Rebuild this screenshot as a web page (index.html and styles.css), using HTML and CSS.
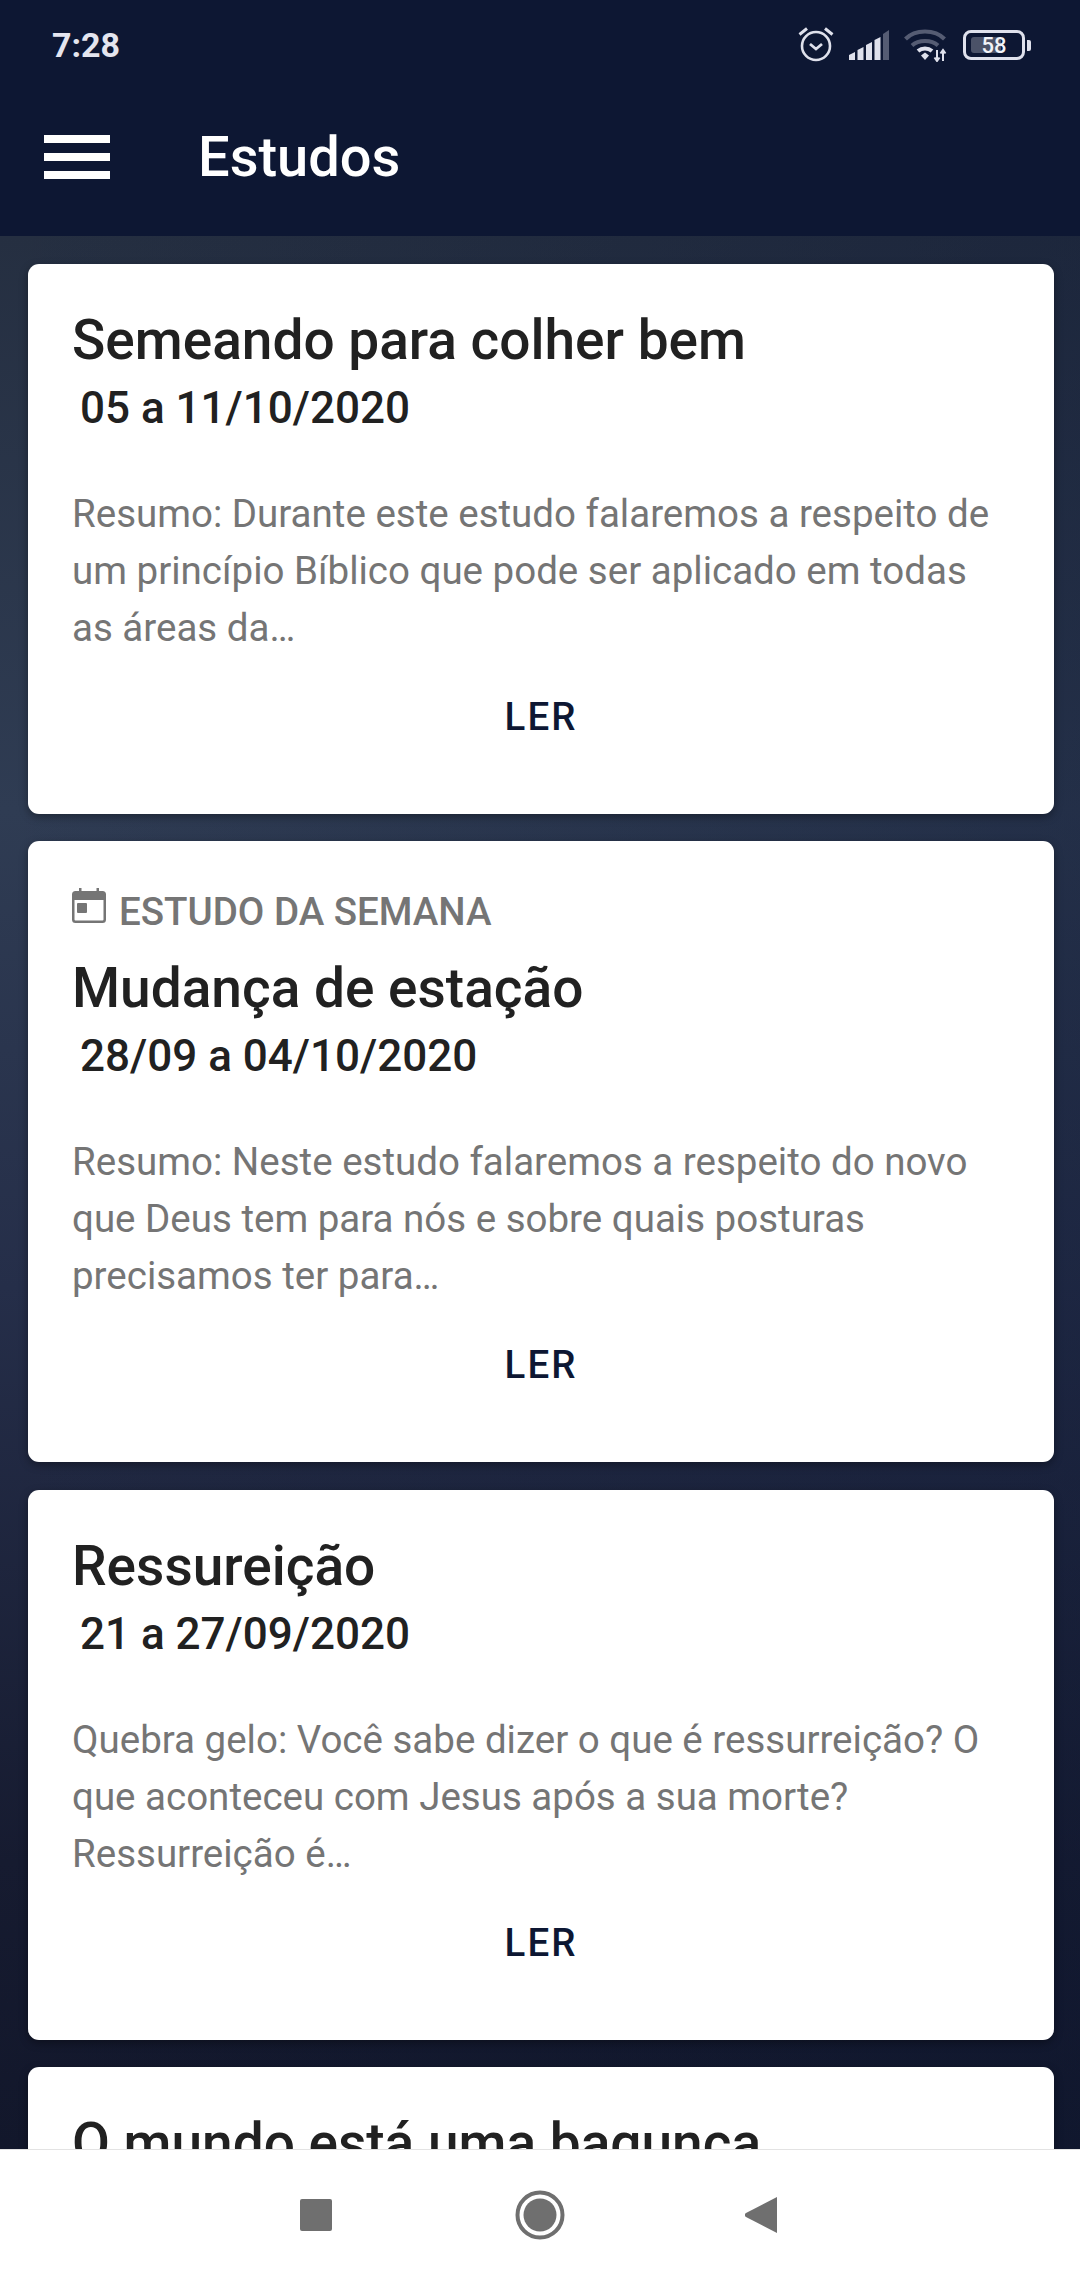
FILE: index.html
```html
<!DOCTYPE html>
<html>
<head>
    <title>Estudos</title>
    <link rel="stylesheet" href="styles.css">
</head>
<body>
    <header class="topbar">
        <div class="status">
            <span class="clock">7:28</span>
            <div class="status-icons">
                <svg class="ic-alarm" width="36" height="36" viewBox="0 0 36 36" fill="none" stroke="#dfe1ec">
                    <circle cx="18" cy="20" r="14" stroke-width="2.600"/>
                    <path d="M12 18l6 5 6-5" stroke-width="2.800"/>
                    <path d="M1.500 8.500L9 2.500M34.500 8.500L27 2.500" stroke-width="3"/>
                </svg>
                <svg class="ic-signal" width="40" height="30" viewBox="0 0 40 30" fill="#dfe1ec">
                    <path d="M0 30v-5l6-3v8z"/>
                    <path d="M8.500 30V20l6-3v13z"/>
                    <path d="M17 30V15l6-3v18z"/>
                    <path d="M25.500 30V10l6-3v23z"/>
                    <path d="M34 30V4l6-4v30z" fill="#555c73"/>
                </svg>
                <svg class="ic-wifi" width="44" height="34" viewBox="0 0 44 34" fill="none">
                    <path d="M1.500 11C11 1 31 1 40.500 11" stroke="#555c73" stroke-width="4"/>
                    <path d="M8 17.500c6.500-6 19.500-6 26 0" stroke="#555c73" stroke-width="4"/>
                    <path d="M14 23c4-3.500 10-3.500 14 0" stroke="#dfe1ec" stroke-width="4"/>
                    <path d="M17 27.500l4-3 4 3-4 4.500z" fill="#dfe1ec"/>
                    <path d="M33 22v11M30.500 29.500l2.500 3.500 2.500-3.500M39 33V22M36.500 25.500l2.500-3.500 2.500 3.500" stroke="#dfe1ec" stroke-width="2"/>
                </svg>
                <div class="battery">
                    <div class="battery-body">
                        <div class="battery-fill"></div>
                        <span class="battery-num">58</span>
                    </div>
                    <div class="battery-cap"></div>
                </div>
            </div>
        </div>
        <div class="toolbar">
            <div class="burger"><span></span><span></span><span></span></div>
            <h1>Estudos</h1>
        </div>
    </header>

    <main class="list">
        <section class="card">
            <h2>Semeando para colher bem</h2>
            <p class="date">05 a 11/10/2020</p>
            <p class="summary">Resumo: Durante este estudo falaremos a respeito de um princípio Bíblico que pode ser aplicado em todas as áreas da…</p>
            <div class="read">LER</div>
        </section>

        <section class="card card-week">
            <div class="week">
                <svg width="34" height="35" viewBox="0 0 34 35" fill="#757575">
                    <path d="M7 0h2.500v3h15V0H27v3h3.500A3.500 3.500 0 0 1 34 6.500v25a3.500 3.500 0 0 1-3.500 3.500h-27A3.500 3.500 0 0 1 0 31.500v-25A3.500 3.500 0 0 1 3.500 3H7zM2.500 12v19.500a1 1 0 0 0 1 1h27a1 1 0 0 0 1-1V12z"/>
                    <rect x="5" y="15" width="10" height="10" rx="1"/>
                </svg>
                <span>ESTUDO DA SEMANA</span>
            </div>
            <h2>Mudança de estação</h2>
            <p class="date">28/09 a 04/10/2020</p>
            <p class="summary">Resumo: Neste estudo falaremos a respeito do novo que Deus tem para nós e sobre quais posturas precisamos ter para…</p>
            <div class="read">LER</div>
        </section>

        <section class="card">
            <h2>Ressureição</h2>
            <p class="date">21 a 27/09/2020</p>
            <p class="summary">Quebra gelo: Você sabe dizer o que é ressurreição? O que aconteceu com Jesus após a sua morte? Ressurreição é…</p>
            <div class="read">LER</div>
        </section>

        <section class="card">
            <h2>O mundo está uma bagunça</h2>
        </section>
    </main>

    <nav class="navbar">
        <svg class="nav-square" width="32" height="32" viewBox="0 0 32 32" fill="#6f6f6f">
            <rect width="32" height="32" rx="2"/>
        </svg>
        <svg class="nav-home" width="50" height="50" viewBox="0 0 50 50" fill="#6f6f6f">
            <circle cx="25" cy="25" r="16.500"/>
            <circle cx="25" cy="25" r="22.500" fill="none" stroke="#6f6f6f" stroke-width="4"/>
        </svg>
        <svg class="nav-back" width="32" height="36" viewBox="0 0 32 36" fill="#6f6f6f">
            <path d="M32 0v36L1 20a2.300 2.300 0 0 1 0-4z"/>
        </svg>
    </nav>
</body>
</html>
```

FILE: styles.css
```css
* {
    box-sizing: border-box;
}

body {
    margin: 0;
    width: 1080px;
    height: 2280px;
    overflow: hidden;
    display: flex;
    flex-direction: column;
    font-family: Roboto, "Liberation Sans", sans-serif;
    background: #fff;
}

/* top bar */
.topbar {
    height: 236px;
    flex: none;
    background: #0d1733;
    color: #fff;
}

.status {
    height: 90px;
    padding: 0 49px 0 52px;
    display: flex;
    justify-content: space-between;
    align-items: center;
}

.clock {
    font-size: 34px;
    font-weight: 700;
    color: #e4e5ef;
}

.status-icons {
    display: flex;
    align-items: center;
    gap: 15px;
}

.ic-alarm {
    margin-bottom: 2px;
}

.battery {
    display: flex;
    align-items: center;
    gap: 2px;
}

.battery-body {
    position: relative;
    width: 62px;
    height: 30px;
    border: 3px solid #dfe1ec;
    border-radius: 8px;
    display: flex;
    align-items: center;
    justify-content: center;
}

.battery-fill {
    position: absolute;
    left: 5px;
    top: 4px;
    bottom: 4px;
    width: 30px;
    background: #4b5268;
    border-radius: 3px;
}

.battery-num {
    position: relative;
    font-size: 22px;
    font-weight: 500;
    color: #f2f3f8;
}

.battery-cap {
    width: 4px;
    height: 11px;
    background: #dfe1ec;
    border-radius: 0 2px 2px 0;
}

.toolbar {
    height: 146px;
    padding: 0 0 13px 44px;
    display: flex;
    align-items: center;
}

.burger {
    width: 66px;
    display: flex;
    flex-direction: column;
    gap: 10px;
}

.burger span {
    height: 8px;
    background: #fff;
}

.toolbar h1 {
    margin: 0 0 0 88px;
    font-size: 56px;
    font-weight: 500;
}

/* study list */
.list {
    flex: 1;
    min-height: 0;
    overflow: hidden;
    padding: 28px 26px 0 28px;
    display: flex;
    flex-direction: column;
    gap: 27px;
    background: linear-gradient(90deg, rgba(13, 23, 51, 0) 0%, rgba(13, 23, 51, .35) 100%), linear-gradient(180deg, #252f41 0%, #2f3c53 30%, #252e49 55%, #161b30 85%, #12172b 100%);
}

.card {
    flex: none;
    padding: 40px 44px 0;
    height: 550px;
    background: #fff;
    border-radius: 11px;
    box-shadow: 0 3px 8px rgba(0, 0, 0, .35);
}

.card h2 {
    margin: 0;
    font-size: 55px;
    line-height: 72px;
    font-weight: 500;
    color: #212121;
}

.date {
    margin: 0;
    padding-left: 8px;
    font-size: 44px;
    line-height: 65px;
    font-weight: 500;
    color: #212121;
}

.summary {
    margin: 44px 0 0;
    font-size: 38.500px;
    line-height: 57px;
    color: #757575;
}

.read {
    margin-top: 31px;
    text-align: center;
    font-size: 38.500px;
    line-height: 60px;
    font-weight: 500;
    letter-spacing: 2px;
    color: #0d1733;
}

.card-week {
    height: 621px;
    margin-bottom: 1px;
}

.week {
    height: 60px;
    margin-bottom: 11px;
    display: flex;
    align-items: center;
    gap: 13px;
    font-size: 38.500px;
    font-weight: 500;
    color: #757575;
}

.week svg {
    margin-bottom: 12px;
}

/* bottom nav */
.navbar {
    height: 131px;
    flex: none;
    background: #fff;
    border-top: 1px solid #e3e3e3;
    display: flex;
    align-items: center;
    padding: 0 0 0 300px;
}

.nav-home {
    margin-left: 183px;
}

.nav-back {
    margin-left: 180px;
}
```
